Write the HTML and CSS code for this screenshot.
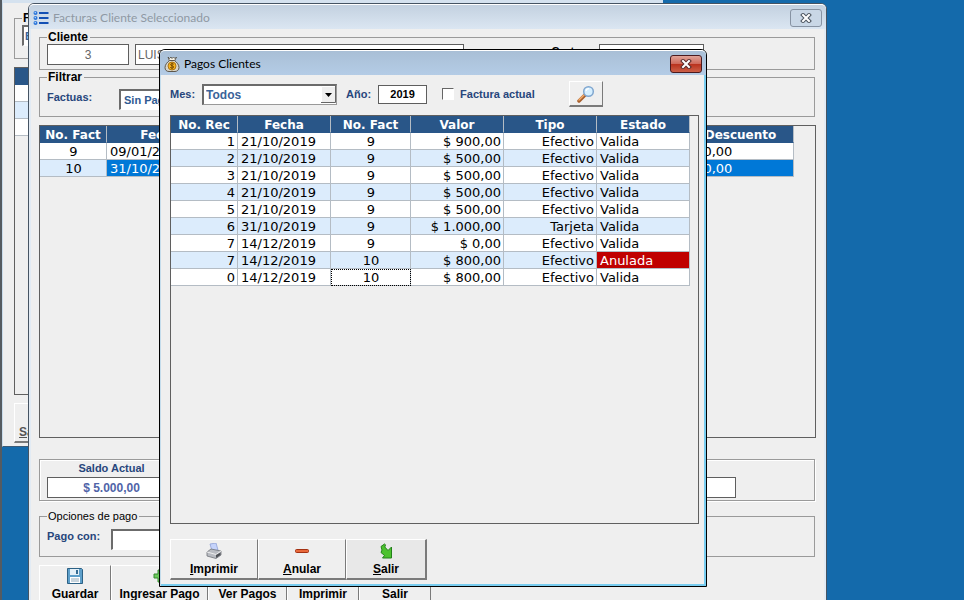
FILE: index.html
```html
<!DOCTYPE html>
<html lang="es">
<head>
<meta charset="utf-8">
<title>Pagos Clientes</title>
<link rel="stylesheet" href="styles.css">
</head>
<body>
<main class="desktop">
  <section class="window window-back" aria-label="Facturas">
    <fieldset class="group back-group">
      <legend>Filtrar</legend>
      <input class="sunken back-input" type="text" value="B" aria-label="Filtro">
    </fieldset>
    <div class="grid-box back-grid">
      <table class="data">
        <thead><tr><th></th></tr></thead>
        <tbody><tr><td></td></tr><tr><td></td></tr><tr><td></td></tr></tbody>
      </table>
    </div>
    <button class="btn back-btn" type="button"><span><u>S</u>alir</span></button>
  </section>

  <section class="window window-mid" aria-labelledby="mid-title">
    <header class="titlebar">
      <svg class="title-icon" viewBox="0 0 16 16" aria-hidden="true">
        <g fill="#2c74d8"><circle cx="2.5" cy="3" r="2"/><circle cx="2.5" cy="8" r="2"/><circle cx="2.5" cy="13" r="2"/></g>
        <g fill="#a9d4ff"><circle cx="2.3" cy="2.6" r="0.8"/><circle cx="2.3" cy="7.6" r="0.8"/><circle cx="2.3" cy="12.6" r="0.8"/></g>
        <path d="M6 3h9.500M6 8h9.500M6 13h9.500" stroke="#1450b4" stroke-width="2"/>
      </svg>
      <h2 id="mid-title">Facturas Cliente Seleccionado</h2>
      <button class="close" type="button" aria-label="Cerrar">
        <svg viewBox="0 0 12 10" aria-hidden="true"><path d="M3 2l6 6M9 2l-6 6" stroke="#4c5560" stroke-width="4" stroke-linecap="square"/><path d="M3 2l6 6M9 2l-6 6" stroke="#fff" stroke-width="2" stroke-linecap="square"/></svg>
      </button>
    </header>
    <div class="mid-body">
      <fieldset class="group client">
        <legend>Cliente</legend>
        <input class="flat client-id" type="text" value="3" aria-label="Código">
        <input class="flat client-name" type="text" value="LUIS" aria-label="Nombre">
        <label class="date-label" for="corte">Corte:</label>
        <input class="flat client-date" id="corte" type="text" value="14/12/2019">
      </fieldset>
      <fieldset class="group filter">
        <legend>Filtrar</legend>
        <label for="facturas">Factuas:</label>
        <select class="sunken filter-select" id="facturas"><option>Sin Pagar</option></select>
      </fieldset>
      <div class="grid-box mid-grid">
        <table class="data invoices">
          <colgroup><col class="c-fact"><col class="c-date"><col><col class="c-disc"></colgroup>
          <thead><tr><th>No. Fact</th><th>Fecha</th><th></th><th>Descuento</th></tr></thead>
          <tbody>
            <tr><td class="center">9</td><td>09/01/2019</td><td></td><td>$ 0,00</td></tr>
            <tr class="selected"><td class="center">10</td><td>31/10/2019</td><td></td><td>$ 0,00</td></tr>
          </tbody>
        </table>
      </div>
      <div class="group balance">
        <div class="balance-item">
          <label for="saldo">Saldo Actual</label>
          <input class="flat" id="saldo" type="text" value="$ 5.000,00">
        </div>
        <input class="flat balance-other" type="text" aria-label="Total">
      </div>
      <fieldset class="group payment">
        <legend class="plain">Opciones de pago</legend>
        <label for="pago">Pago con:</label>
        <input class="sunken" id="pago" type="text">
      </fieldset>
      <div class="buttons mid-buttons">
        <button class="btn" type="button">
          <svg viewBox="0 0 16 16" aria-hidden="true"><path d="M0.500 0.500h14l1 1v14h-15z" fill="#5d9fca" stroke="#2c6185"/><path d="M3 1h9v6H3z" fill="#e4f0f8"/><path d="M9 2h2v4H9z" fill="#356b91"/><path d="M3 9h10v6H3z" fill="#fff"/><path d="M4 11h8M4 13h8" stroke="#91a8b8"/></svg>
          <span>Guardar</span>
        </button>
        <button class="btn wide" type="button">
          <svg viewBox="0 0 16 16" aria-hidden="true"><path d="M6 2h4v4h4v4h-4v4H6v-4H2V6h4z" fill="#6cc95c" stroke="#348a2e"/></svg>
          <span>Ingresar Pago</span>
        </button>
        <button class="btn medium" type="button"><span>Ver Pagos</span></button>
        <button class="btn" type="button"><span>Imprimir</span></button>
        <button class="btn" type="button"><span>Salir</span></button>
      </div>
    </div>
  </section>

  <section class="window dialog" role="dialog" aria-labelledby="dlg-title">
    <header class="titlebar">
      <svg class="title-icon" viewBox="0 0 16 16" aria-hidden="true">
        <path d="M4 1l1.500 1.500L7 1l1 1.500L9.500 1l1.500 1.500L12.500 1l-2 4h-5z" fill="#f5f0e2" stroke="#4d463b" stroke-width="0.800"/>
        <path d="M5.500 4.500h5c2 1.500 4.500 4 4.500 7 0 2.500-2 4-4 4H5c-2.500 0-4-1.500-4-4 0-3 2.500-5.500 4.500-7z" fill="#d8d4c8" stroke="#5d564b"/>
        <circle cx="8" cy="10" r="4" fill="#f7b521" stroke="#9b6307" stroke-width="0.800"/>
        <path d="M9.800 8.300c-.6-.8-3.300-.9-3.300.4s3.200.9 3.200 2.300-2.700 1.300-3.500.4M8 6.800v6.400" stroke="#764800" fill="none"/>
      </svg>
      <h1 id="dlg-title">Pagos Clientes</h1>
      <button class="close close-red" type="button" aria-label="Cerrar">
        <svg viewBox="0 0 12 10" aria-hidden="true"><path d="M3 2l6 6M9 2l-6 6" stroke="#582b2b" stroke-width="4" stroke-linecap="square"/><path d="M3 2l6 6M9 2l-6 6" stroke="#fff" stroke-width="2" stroke-linecap="square"/></svg>
      </button>
    </header>
    <div class="dlg-body">
      <form class="toolbar">
        <label for="mes">Mes:</label>
        <span class="combo">
          <select class="sunken" id="mes"><option>Todos</option></select>
          <svg class="combo-arrow" viewBox="0 0 15 17" aria-hidden="true"><path d="M0 0h15v17H0z" fill="#efefef"/><path d="M0.500 16V0.500H14" stroke="#fff" fill="none"/><path d="M0 16.500h14.500V0" stroke="#666" fill="none"/><path d="M4 7h7l-3.500 4z"/></svg>
        </span>
        <label class="year-label" for="anio">Año:</label>
        <input class="flat year" id="anio" type="text" value="2019">
        <input class="check" id="actual" type="checkbox">
        <label for="actual">Factura actual</label>
        <button class="btn search" type="button" aria-label="Buscar">
          <svg viewBox="0 0 18 18" aria-hidden="true"><path d="M2 16l6-6" stroke="#a85f2c" stroke-width="3.500" stroke-linecap="round"/><path d="M2 15l5-5" stroke="#f2ab6b" stroke-width="1.500" stroke-linecap="round"/><circle cx="11.500" cy="6.500" r="4.800" fill="#d6efff" stroke="#7fa6cf" stroke-width="1.500"/><path d="M9 6c.3-1.500 1.500-2.300 3-2.300" stroke="#fff" stroke-width="1.300" fill="none"/></svg>
        </button>
      </form>
      <div class="grid-box dlg-grid">
        <table class="data payments">
          <colgroup><col class="p-rec"><col><col class="p-fact"><col><col><col></colgroup>
          <thead><tr><th>No. Rec</th><th>Fecha</th><th>No. Fact</th><th>Valor</th><th>Tipo</th><th>Estado</th></tr></thead>
          <tbody>
            <tr><td>1</td><td>21/10/2019</td><td>9</td><td>$ 900,00</td><td>Efectivo</td><td>Valida</td></tr>
            <tr><td>2</td><td>21/10/2019</td><td>9</td><td>$ 500,00</td><td>Efectivo</td><td>Valida</td></tr>
            <tr><td>3</td><td>21/10/2019</td><td>9</td><td>$ 500,00</td><td>Efectivo</td><td>Valida</td></tr>
            <tr><td>4</td><td>21/10/2019</td><td>9</td><td>$ 500,00</td><td>Efectivo</td><td>Valida</td></tr>
            <tr><td>5</td><td>21/10/2019</td><td>9</td><td>$ 500,00</td><td>Efectivo</td><td>Valida</td></tr>
            <tr><td>6</td><td>31/10/2019</td><td>9</td><td>$ 1.000,00</td><td>Tarjeta</td><td>Valida</td></tr>
            <tr><td>7</td><td>14/12/2019</td><td>9</td><td>$ 0,00</td><td>Efectivo</td><td>Valida</td></tr>
            <tr><td>7</td><td>14/12/2019</td><td>10</td><td>$ 800,00</td><td>Efectivo</td><td class="void">Anulada</td></tr>
            <tr><td>0</td><td>14/12/2019</td><td class="focused">10</td><td>$ 800,00</td><td>Efectivo</td><td>Valida</td></tr>
          </tbody>
        </table>
      </div>
      <div class="buttons dlg-buttons">
        <button class="btn" type="button">
          <svg viewBox="0 0 16 16" aria-hidden="true"><path d="M4 1l6-1 2 7-6 1z" fill="#c5d3fb" stroke="#8fa1d6" stroke-width="0.800"/><path d="M1 9l4-3 10 2v4l-5 3.500-9-2.500z" fill="#b9bcc2" stroke="#6f7278" stroke-width="0.800"/><path d="M1 9l9 2.500L15 8" fill="none" stroke="#eee"/><path d="M10 12l4.500-2.500v2.500L10 15z" fill="#4d5055"/></svg>
          <span><u>I</u>mprimir</span>
        </button>
        <button class="btn" type="button">
          <svg viewBox="0 0 16 16" aria-hidden="true"><rect x="1.500" y="6.500" width="13" height="3" rx="1" fill="#e8683a" stroke="#a33112"/></svg>
          <span><u>A</u>nular</span>
        </button>
        <button class="btn last" type="button">
          <svg viewBox="0 0 16 16" aria-hidden="true"><path d="M3 3.500L6.500 1l1 .8L6.800 4l3.200 3.500L13.500 4v11H4.500l2-2.500L3 9.500l1-2.500z" fill="#4cc22e" stroke="#23801a"/></svg>
          <span><u>S</u>alir</span>
        </button>
      </div>
    </div>
  </section>
</main>
</body>
</html>
```
FILE: styles.css
```css
* {
  box-sizing: border-box;
}

body {
  margin: 0;
  font: bold 11px/14px "Liberation Sans", Arial, sans-serif;
  color: #27467c;
}

button,
input,
select {
  font: inherit;
  color: inherit;
  margin: 0;
  border-radius: 0;
}

.desktop {
  position: relative;
  height: 100vh;
  min-height: 480px;
  overflow: hidden;
  background: #146aab;
  border-left: 2px solid #555b61;
}

.window {
  position: absolute;
  display: flex;
  flex-direction: column;
  background: #efefef;
}

.window-back {
  left: 0;
  right: 301px;
  top: 0;
  bottom: 153px;
  padding: 8px 11px 3px;
  border-top: 3px solid #d5e2ef;
  border-left: 1px solid #c9dcec;
  border-bottom: 1px solid #3a5b78;
}

.window-mid {
  left: 26px;
  right: 137px;
  top: 3px;
  bottom: -15px;
  border: 1px solid #465463;
  border-radius: 6px 6px 0 0;
  box-shadow: inset 2px 0 #e2ebf4, inset -2px 0 #e2ebf4;
}

.dialog {
  left: 157px;
  right: 257px;
  top: 49px;
  bottom: 13px;
  border: 1px solid #000;
  border-radius: 6px 6px 0 0;
  box-shadow: inset 1px 0 #c3dcec, inset -2px -2px #79cdf0;
}

.titlebar {
  display: flex;
  align-items: center;
  gap: 4px;
  height: 25px;
  padding: 2px 4px 0;
  border-radius: 5px 5px 0 0;
  border-top: 1px solid #fff;
  background: linear-gradient(#c3d1e0, #dbe6f2);
}

.dialog .titlebar {
  background: linear-gradient(#a9bfd6, #b4cce6);
}

.title-icon {
  width: 16px;
  height: 16px;
}

.titlebar h1,
.titlebar h2 {
  flex: 1;
  margin: 0;
  font: 12px/16px Lato, "Open Sans", sans-serif;
  color: #000;
}

.titlebar h2 {
  color: #8f99a4;
}

.close {
  display: flex;
  align-items: center;
  justify-content: center;
  width: 32px;
  height: 18px;
  padding: 0;
  border: 1px solid #8793a3;
  border-radius: 3px;
  background: #c9d7e6;
}

.close svg {
  width: 12px;
  height: 10px;
}

.close-red {
  border-color: #4b1a1e;
  background: linear-gradient(#e0a398, #cf6a5b 48%, #b8301c 50%, #cc6048);
}

.group {
  display: flex;
  min-width: 0;
  margin: 0;
  padding: 0 7px;
  border: 1px solid #9a9a9a;
  box-shadow: inset 1px 1px #fff, 1px 1px #fff;
}

fieldset.group {
  box-shadow: none;
}

.group legend {
  padding: 0 2px 0 1px;
  font-size: 12px;
  color: #000;
}

.group legend.plain {
  font-size: 11px;
  font-weight: normal;
}

.flat {
  height: 21px;
  padding: 0 2px;
  border: 1px solid #5e5e5e;
  background: #fff;
}

.sunken {
  height: 21px;
  padding: 0 3px;
  appearance: none;
  border: 1px solid #fff;
  border-top: 2px solid #6b6b6b;
  border-left: 2px solid #6b6b6b;
  background: #fff;
}

.grid-box {
  flex: 1;
  min-height: 0;
  overflow: hidden;
  border: 1px solid #5f5f5f;
}

.data {
  width: calc(100% - 8px);
  table-layout: fixed;
  border-spacing: 0;
  font: 13px/14px "DejaVu Sans", Verdana, sans-serif;
  color: #000;
}

.data th,
.data td {
  height: 17px;
  padding: 2px 2px 0;
  border-right: 1px solid #b4bcc4;
  border-bottom: 1px solid #b4bcc4;
  background: #fff;
  text-align: left;
  white-space: nowrap;
}

.data td {
  padding-left: 3px;
}

.data th {
  padding: 2px 0 0;
  font-size: 12px;
  text-align: center;
  color: #fff;
  background: #295688;
  border-bottom-color: #295688;
}

.data tbody tr:nth-child(even) td {
  background: #dcecfc;
}

.data .center {
  text-align: center;
}

.btn {
  display: flex;
  flex-direction: column;
  align-items: center;
  justify-content: flex-end;
  padding: 2px;
  border: 1px solid #fff;
  border-right-color: #7a7a7a;
  border-bottom: 2px solid #7a7a7a;
  background: #efefef;
  color: #000;
}

.btn svg {
  width: 16px;
  height: 16px;
}

.buttons {
  display: flex;
}

.buttons .btn {
  height: 41px;
  gap: 3px;
  font-size: 12px;
}

/* Background window */

.back-group {
  height: 48px;
}

.back-group .back-input {
  flex: 1;
  padding: 0 1px;
  color: #3a6399;
}

.back-grid {
  margin-top: 8px;
}

.back-btn {
  height: 40px;
  width: 72px;
  margin-top: 8px;
  padding-left: 4px;
  align-items: flex-start;
  font-size: 12px;
  color: #555;
}

/* Invoice window */

.mid-body {
  flex: 1;
  display: flex;
  flex-direction: column;
  min-height: 0;
  padding: 1px 10px 0;
}

.client {
  height: 40px;
}

.client,
.filter {
  margin-right: 1px;
}

.client input {
  font-weight: normal;
  font-size: 12px;
  color: #666;
}

.client-id {
  width: 82px;
  margin-right: 6px;
  text-align: center;
}

.client .client-name {
  flex: 1;
}

.date-label {
  margin: 0 15px 0 88px;
  color: #000;
}

.client .client-date {
  width: 105px;
  margin-right: 103px;
  padding-left: 4px;
  color: #2f6279;
}

.filter {
  height: 47px;
}

.filter label {
  width: 72px;
  padding-top: 6px;
}

.filter-select {
  width: 140px;
  margin-top: 5px;
  color: #2f5a92;
}

.mid-grid {
  margin-top: 8px;
}

.invoices {
  width: calc(100% - 21px);
}

.c-fact {
  width: 67px;
}

.c-date {
  width: 107px;
}

.c-disc {
  width: 106px;
}

.invoices tbody .selected td:not(.center) {
  color: #fff;
  background: #0078d7;
}

.balance {
  height: 42px;
  margin: 21px 1px 0 0;
  justify-content: space-between;
  align-items: flex-end;
  padding-bottom: 2px;
}

.balance-item {
  display: flex;
  flex-direction: column;
  width: 129px;
  gap: 2px;
  text-align: center;
}

.balance-item input {
  width: 100%;
  text-align: center;
  font-size: 12px;
  color: #5064a8;
}

.balance-other {
  width: 129px;
  margin-right: 71px;
}

.payment {
  height: 48px;
  margin: 8px 1px 0 0;
}

.payment label {
  width: 64px;
  padding-top: 6px;
}

.payment .sunken {
  width: 120px;
  margin-top: 6px;
}

.mid-buttons {
  margin-top: 8px;
}

.mid-buttons .btn {
  width: 72px;
  height: 49px;
  justify-content: flex-start;
}

.mid-buttons .btn:nth-child(n + 3) {
  padding-top: 21px;
}

.mid-buttons .wide {
  width: 97px;
}

.mid-buttons .medium {
  width: 79px;
}

/* Payments dialog */

.dlg-body {
  flex: 1;
  display: flex;
  flex-direction: column;
  min-height: 0;
  padding: 0 7px 6px 10px;
}

.toolbar {
  display: flex;
  align-items: center;
  height: 40px;
  padding-bottom: 2px;
}

.combo {
  position: relative;
  width: 135px;
  margin-left: 7px;
}

.combo select {
  display: block;
  width: 100%;
  padding: 0 2px;
  border-right: 1px solid #999;
  border-bottom: 1px solid #999;
  font-size: 12px;
  color: #3a6399;
}

.combo-arrow {
  position: absolute;
  right: 1px;
  top: 2px;
  width: 15px;
  height: 17px;
  pointer-events: none;
}

.year-label {
  margin-left: 9px;
}

.year {
  width: 49px;
  height: 19px;
  margin-left: 7px;
  text-align: center;
  color: #000;
}

.check {
  appearance: none;
  width: 12px;
  height: 12px;
  margin: 0 6px 0 15px;
  border: 1px solid #fff;
  border-top-color: #666;
  border-left-color: #666;
  background: #fff;
}

.search {
  width: 34px;
  height: 26px;
  margin-left: 34px;
  justify-content: center;
}

.search svg {
  width: 18px;
  height: 18px;
}

.p-rec {
  width: 67px;
}

.p-fact {
  width: 80px;
}

.payments td:nth-child(1),
.payments td:nth-child(4),
.payments td:nth-child(5) {
  text-align: right;
}

.payments td:nth-child(3) {
  text-align: center;
}

.payments tbody tr td.void {
  color: #fff;
  background: #c00000;
}

.payments .focused {
  outline: 1px dotted #000;
  outline-offset: -1px;
}

.dlg-buttons {
  margin-top: 15px;
}

.dlg-buttons .btn {
  width: 88px;
}

.dlg-buttons .last {
  width: 81px;
  border-right-width: 2px;
  background: #e8e8e8;
}
```
